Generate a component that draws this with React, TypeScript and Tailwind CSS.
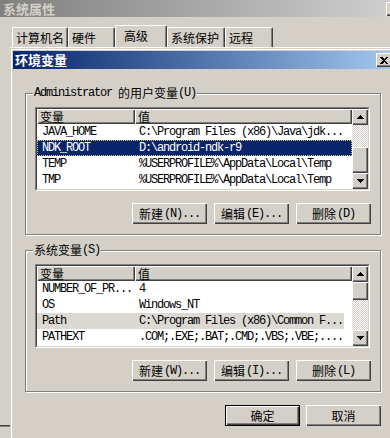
import React from 'react';

interface EnvVar {
  name: string;
  value: string;
}

const cjk = "font-['Noto_Sans_CJK_SC',sans-serif] text-[12px]";
const mono = "font-['Liberation_Mono','Noto_Sans_CJK_SC',monospace] text-[12px] tracking-[-1.2px]";
const raised =
  'bg-[#d4d0c8] shadow-[inset_1px_1px_0_#ffffff,inset_-1px_-1px_0_#404040,inset_-2px_-2px_0_#808080]';
const checker =
  'bg-[repeating-conic-gradient(#d4d0c8_0_25%,#ffffff_0_50%)] bg-[length:2px_2px]';

const userVars: EnvVar[] = [
  { name: 'JAVA_HOME', value: 'C:\\Program Files (x86)\\Java\\jdk...' },
  { name: 'NDK_ROOT', value: 'D:\\android-ndk-r9' },
  { name: 'TEMP', value: '%USERPROFILE%\\AppData\\Local\\Temp' },
  { name: 'TMP', value: '%USERPROFILE%\\AppData\\Local\\Temp' },
];

const sysVars: EnvVar[] = [
  { name: 'NUMBER_OF_PR...', value: '4' },
  { name: 'OS', value: 'Windows_NT' },
  { name: 'Path', value: 'C:\\Program Files (x86)\\Common F...' },
  { name: 'PATHEXT', value: '.COM;.EXE;.BAT;.CMD;.VBS;.VBE;....' },
];

const Arrow = ({ up }: { up?: boolean }) => (
  <div className={`h-[16px] w-[16px] shrink-0 flex items-center justify-center ${raised}`}>
    <svg width="7" height="4" viewBox="0 0 7 4" shapeRendering="crispEdges">
      <path d={up ? 'M3.5 0 L7 4 L0 4Z' : 'M0 0 L7 0 L3.5 4Z'} fill="#000" />
    </svg>
  </div>
);

const XpButton = ({
  zh,
  hot,
  isDefault,
  width,
}: {
  zh: string;
  hot?: string;
  isDefault?: boolean;
  width: string;
}) => (
  <button
    className={`${width} h-[21px] flex items-center justify-center text-black ${raised} ${
      isDefault ? 'border border-black' : ''
    }`}
  >
    <span className={`${cjk} leading-[14px]`}>{zh}</span>
    {hot && <span className={`${mono} leading-[14px] ml-[1px]`}>{hot}</span>}
  </button>
);

const VarList = ({
  rows,
  selected,
  focused,
  beforeCls,
  thumbCls,
}: {
  rows: EnvVar[];
  selected: number;
  focused: boolean;
  beforeCls: string;
  thumbCls: string;
}) => (
  <div className="w-[335px] h-[84px] border border-t-[#808080] border-l-[#808080] border-r-white border-b-white">
    <div className="h-full flex bg-white border border-t-[#404040] border-l-[#404040] border-r-[#d4d0c8] border-b-[#d4d0c8]">
      <div className="flex-1 flex flex-col">
        <div className="h-[15px] flex">
          <div className={`w-[98px] pl-[3px] ${raised} ${cjk} leading-[15px] text-black`}>变量</div>
          <div className={`flex-1 pl-[3px] ${raised} ${cjk} leading-[15px] text-black`}>值</div>
        </div>
        {rows.map((r, i) => {
          const sel = i === selected;
          const rowCls = sel
            ? focused
              ? 'bg-[#0a246a] text-white outline-1 outline-dotted outline-[#d8d080] -outline-offset-1'
              : 'bg-[#dcd8d2] text-black mr-[8px]'
            : 'text-black';
          return (
            <div key={r.name} className={`h-[16px] flex ${rowCls}`}>
              <div className={`w-[98px] shrink-0 pl-[5px] ${mono} leading-[16px] whitespace-pre`}>{r.name}</div>
              <div className={`flex-1 pl-[4px] ${mono} leading-[16px] whitespace-pre`}>{r.value}</div>
            </div>
          );
        })}
      </div>
      <div className="w-[16px] flex flex-col">
        <Arrow up />
        <div className={`${beforeCls} ${checker}`} />
        <div className={`${thumbCls} ${raised}`} />
        <div className={`flex-1 ${checker}`} />
        <Arrow />
      </div>
    </div>
  </div>
);

const GroupBox = ({ legend, children }: { legend: React.ReactNode; children: React.ReactNode }) => (
  <div className="relative border border-[#808080] shadow-[inset_1px_1px_0_#ffffff,1px_1px_0_#ffffff] px-[9px] pt-[13px] pb-[10px]">
    <div className="absolute left-[7px] -top-[8px] bg-[#d4d0c8] px-[1px] leading-[14px] text-black flex items-center">
      {legend}
    </div>
    {children}
  </div>
);

const App: React.FC = () => {
  const tabs = [
    { label: '计算机名', w: 'w-[56px]' },
    { label: '硬件', w: 'w-[47px]' },
    { label: '高级', w: 'w-[52px]', active: true },
    { label: '系统保护', w: 'w-[58px]' },
    { label: '远程', w: 'w-[48px]' },
  ];

  return (
    <div className="relative w-[390px] h-[438px] overflow-hidden bg-[#d4d0c8]">
      {/* 系统属性 window behind */}
      <div className="h-[17px] flex items-center justify-between bg-gradient-to-r from-[#808080] to-[#cfcfcf] pl-[3px]">
        <span className="font-['Noto_Sans_CJK_SC',sans-serif] text-[13px] font-bold text-[#d4d0c8] leading-[17px]">
          系统属性
        </span>
        <div className={`w-[16px] h-[14px] mr-[-12px] ${raised}`} />
      </div>
      <div className="h-[22px] mt-[8px] ml-[12px] flex items-end">
        {tabs.map((t) => (
          <div
            key={t.label}
            className={`${t.w} ${
              t.active ? 'h-[22px] pl-[8px]' : 'h-[20px] pl-[3px]'
            } border-t border-l border-white border-r border-r-[#404040] rounded-t-[2px] shadow-[inset_-1px_0_0_#808080] ${cjk} text-black leading-[20px]`}
          >
            {t.label}
          </div>
        ))}
      </div>
      <div className="h-[378px] ml-[10px] border-l border-t border-white" />
      <div className="h-[2px] border-t border-[#404040] border-b border-b-[#808080]" />

      {/* 环境变量 dialog */}
      <div className="absolute left-[10px] top-[48px] w-[386px] h-[400px] bg-[#d4d0c8] border-l border-t border-[#d4d0c8]">
        <div className="h-full border-l border-t border-white pl-[1px] pt-[1px]">
          <div className="h-[18px] flex items-center justify-between bg-gradient-to-r from-[#0a246a] to-[#a6caf0] pl-[2px] pr-[4px]">
            <span className="font-['Noto_Sans_CJK_SC',sans-serif] text-[13px] font-bold text-white leading-[18px]">
              环境变量
            </span>
            <div className={`w-[16px] h-[14px] flex items-center justify-center ${raised}`}>
              <svg width="8" height="7" viewBox="0 0 8 7" shapeRendering="crispEdges">
                <path d="M0 0h2l2 2 2-2h2L5 3.5 8 7H6L4 5 2 7H0l3-3.5z" fill="#000" />
              </svg>
            </div>
          </div>

          <div className="w-[356px] ml-[12px] mt-[24px] flex flex-col">
            <GroupBox
              legend={
                <>
                  <span className={mono}>Administrator</span>
                  <span className={`${cjk} ml-[6px]`}>的用户变量</span>
                  <span className={mono}>(U)</span>
                </>
              }
            >
              <VarList rows={userVars} selected={1} focused beforeCls="h-[22px]" thumbCls="h-[26px]" />
              <div className="mt-[12px] flex justify-end gap-[7px]">
                <XpButton zh="新建" hot="(N)..." width="w-[75px]" />
                <XpButton zh="编辑" hot="(E)..." width="w-[75px]" />
                <XpButton zh="删除" hot="(D)" width="w-[75px]" />
              </div>
            </GroupBox>

            <div className="mt-[15px]">
              <GroupBox
                legend={
                  <>
                    <span className={cjk}>系统变量</span>
                    <span className={mono}>(S)</span>
                  </>
                }
              >
                <VarList rows={sysVars} selected={2} focused={false} beforeCls="h-0" thumbCls="h-[18px]" />
                <div className="mt-[12px] flex justify-end gap-[7px]">
                  <XpButton zh="新建" hot="(W)..." width="w-[75px]" />
                  <XpButton zh="编辑" hot="(I)..." width="w-[75px]" />
                  <XpButton zh="删除" hot="(L)" width="w-[75px]" />
                </div>
              </GroupBox>
            </div>

            <div className="mt-[13px] flex justify-end gap-[6px]">
              <XpButton zh="确定" isDefault width="w-[75px]" />
              <XpButton zh="取消" width="w-[75px]" />
            </div>
          </div>
        </div>
      </div>
    </div>
  );
};

export default App;
